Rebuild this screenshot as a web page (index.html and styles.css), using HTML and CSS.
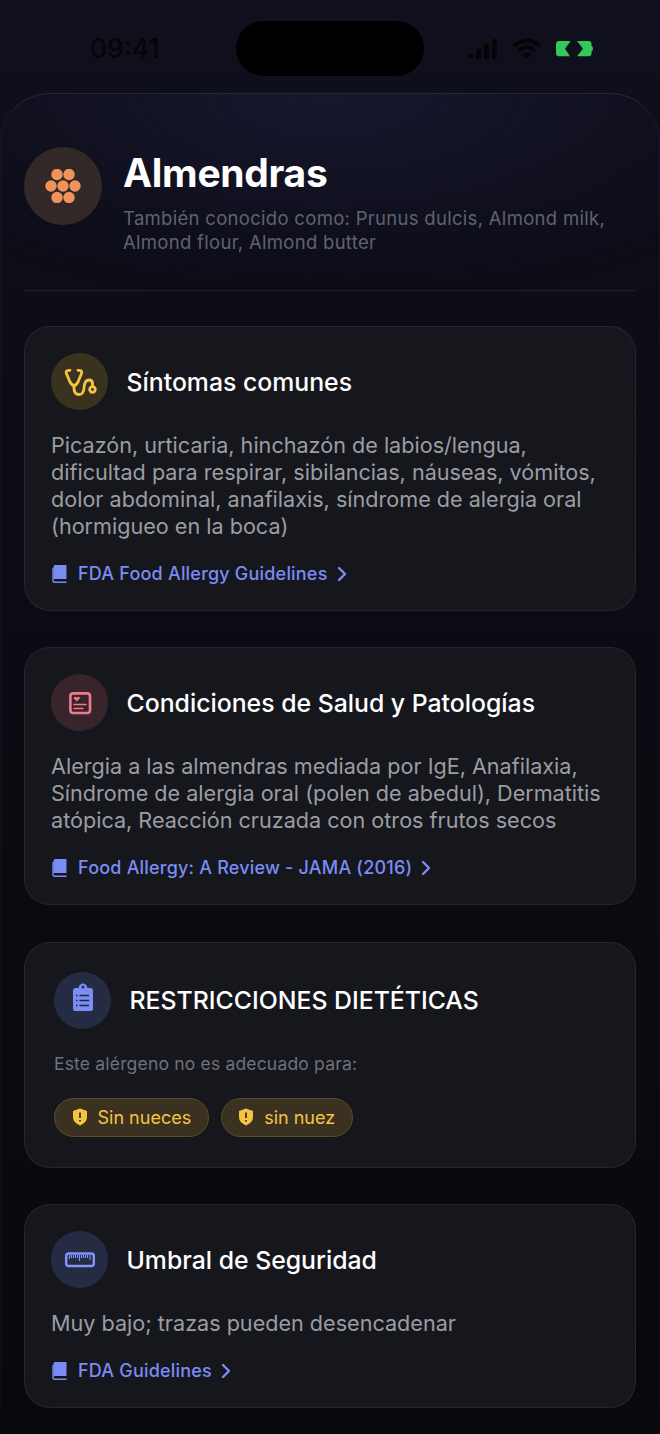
FILE: index.html
```html
<!DOCTYPE html>
<html lang="es">
<head>
<meta charset="UTF-8">
<meta name="viewport" content="width=device-width, initial-scale=1.0">
<title>Almendras</title>
<link rel="stylesheet" href="styles.css">
</head>
<body>
<div class="status-bar">
    <span class="time">09:41</span>
    <div class="island"></div>
    <div class="status-icons">
        <svg class="signal" width="30" height="22" viewBox="0 0 30 22" fill="#050507">
            <rect x="0" y="15" width="5" height="6" rx="2"/>
            <rect x="8" y="11" width="5" height="10" rx="1.5"/>
            <rect x="16" y="6" width="5" height="15" rx="1.5"/>
            <rect x="24" y="1" width="5" height="20" rx="1.5"/>
        </svg>
        <svg class="wifi" width="30" height="22" viewBox="0 0 30 22" fill="none" stroke="#050507" stroke-width="3.2">
            <path d="M2 8 Q15 -3 28 8"/>
            <path d="M7 12.5 Q15 5.5 23 12.5"/>
            <path d="M15 21 L10.5 16.5 Q15 13 19.5 16.5 Z" fill="#050507" stroke="none"/>
        </svg>
        <svg class="battery" width="37" height="16" viewBox="0 0 37 16" fill="#34c759">
            <path d="M3 0H14.700L9 7.700L14 15.300H3Q0 15.300 0 12.300V3Q0 0 3 0Z"/>
            <path d="M21 0H32.500Q35.500 0 35.500 3V4.800Q37 5.500 37 7.700Q37 9.800 35.500 10.500V12.300Q35.500 15.300 32.500 15.300H21L27 7.700Z"/>
        </svg>
    </div>
</div>

<div class="sheet">
    <header class="head">
        <div class="head-icon">
            <svg width="36" height="34" viewBox="0 0 36 34" fill="#f0935a">
                <circle cx="12" cy="5.500" r="5.700"/><circle cx="24" cy="5.500" r="5.700"/>
                <circle cx="6" cy="17" r="5.700"/><circle cx="18" cy="17" r="5.700"/><circle cx="30" cy="17" r="5.700"/>
                <circle cx="12" cy="28.500" r="5.700"/><circle cx="24" cy="28.500" r="5.700"/>
            </svg>
        </div>
        <div class="head-text">
            <h1>Almendras</h1>
            <p>También conocido como: Prunus dulcis, Almond milk, Almond flour, Almond butter</p>
        </div>
    </header>

    <section class="card">
        <div class="card-head">
            <div class="round yellow">
                <svg width="36" height="36" viewBox="0 0 36 36" fill="none" stroke="#f5c542" stroke-width="2.800" stroke-linecap="round">
                    <path d="M8 6.300H6.300Q3.400 6.300 4.400 9.600L8 18Q12 25 16 18L19.500 9.600Q20.500 6.300 17.500 6.300H16"/>
                    <path d="M12 22.500V25Q12.500 30.500 17 30.500Q21.500 30.500 22 24Q22.500 16 27 16Q30.500 16 30.500 19.500V22.500"/>
                    <circle cx="30.500" cy="25.500" r="2.800"/>
                </svg>
            </div>
            <h2>Síntomas comunes</h2>
        </div>
        <p class="body-text">Picazón, urticaria, hinchazón de labios/lengua, dificultad para respirar, sibilancias, náuseas, vómitos, dolor abdominal, anafilaxis, síndrome de alergia oral (hormigueo en la boca)</p>
        <a class="source">
            <svg class="book" width="15" height="18" viewBox="0 0 15 18"><path d="M3 0H14.500V14H3Q2 14 1.500 14.500V2Q1.500 0 3 0Z" fill="#7b8cf5"/><path d="M1 3V15.500Q1 17.300 3 17.300H14.500" fill="none" stroke="#7b8cf5" stroke-width="1.400"/></svg>
            FDA Food Allergy Guidelines
            <svg class="chev" width="10" height="16" viewBox="0 0 10 16" fill="none" stroke="#7b8cf5" stroke-width="2.400" stroke-linecap="round" stroke-linejoin="round"><path d="M2 2L8 8L2 14"/></svg>
        </a>
    </section>

    <section class="card">
        <div class="card-head">
            <div class="round pink">
                <svg width="36" height="36" viewBox="0 0 36 36" fill="none" stroke="#f07a8a" stroke-width="2.200" stroke-linecap="round">
                    <rect x="8.400" y="8.400" width="19.600" height="19.600" rx="2.800" stroke-width="2.600"/>
                    <path d="M14.800 16.600L11.800 13.600Q11.300 11.800 13 11.800Q14.300 11.800 14.800 12.800Q15.300 11.800 16.600 11.800Q18.300 11.800 17.800 13.600Z" fill="#f07a8a" stroke="none"/>
                    <path d="M12 19.500H24" stroke-width="1.500"/>
                    <path d="M12 23.500H21" stroke-width="1.500"/>
                </svg>
            </div>
            <h2>Condiciones de Salud y Patologías</h2>
        </div>
        <p class="body-text">Alergia a las almendras mediada por IgE, Anafilaxia, Síndrome de alergia oral (polen de abedul), Dermatitis atópica, Reacción cruzada con otros frutos secos</p>
        <a class="source">
            <svg class="book" width="15" height="18" viewBox="0 0 15 18"><path d="M3 0H14.500V14H3Q2 14 1.500 14.500V2Q1.500 0 3 0Z" fill="#7b8cf5"/><path d="M1 3V15.500Q1 17.300 3 17.300H14.500" fill="none" stroke="#7b8cf5" stroke-width="1.400"/></svg>
            Food Allergy: A Review - JAMA (2016)
            <svg class="chev" width="10" height="16" viewBox="0 0 10 16" fill="none" stroke="#7b8cf5" stroke-width="2.400" stroke-linecap="round" stroke-linejoin="round"><path d="M2 2L8 8L2 14"/></svg>
        </a>
    </section>

    <section class="card diet">
        <div class="card-head">
            <div class="round blue">
                <svg width="36" height="36" viewBox="0 0 36 36">
                    <path d="M10 6H13.500Q14.500 1.500 18 1.500Q21.500 1.500 22.500 6H26Q28 6 28 8.500V26.500Q28 29 26 29H10Q8 29 8 26.500V8.500Q8 6 10 6Z" fill="#7b8cf5"/>
                    <circle cx="18" cy="5" r="1.500" fill="#2a2f4a"/>
                    <path d="M14.500 13.500H24M14.500 18.500H24M14.500 23.500H24M11 13.500H12.500M11 18.500H12.500M11 23.500H12.500" stroke="#20243c" stroke-width="1.500"/>
                </svg>
            </div>
            <h2>RESTRICCIONES DIETÉTICAS</h2>
        </div>
        <p class="note">Este alérgeno no es adecuado para:</p>
        <div class="chips">
            <span class="chip">
                <svg width="16" height="18" viewBox="0 0 16 18"><path d="M8 0.500L15 3V9Q15 14.500 8 17.500Q1 14.500 1 9V3Z" fill="#f5c542"/><path d="M8 4.500V10M8 12V13.500" stroke="#3a3120" stroke-width="1.800"/></svg>
                Sin nueces
            </span>
            <span class="chip">
                <svg width="16" height="18" viewBox="0 0 16 18"><path d="M8 0.500L15 3V9Q15 14.500 8 17.500Q1 14.500 1 9V3Z" fill="#f5c542"/><path d="M8 4.500V10M8 12V13.500" stroke="#3a3120" stroke-width="1.800"/></svg>
                sin nuez
            </span>
        </div>
    </section>

    <section class="card">
        <div class="card-head">
            <div class="round blue">
                <svg width="36" height="36" viewBox="0 0 36 36" fill="none" stroke="#8494fa">
                    <rect x="4.200" y="11.500" width="27.600" height="12.500" rx="2.500" stroke-width="2.400"/>
                    <path d="M7.500 13V17M9.500 13V16M11.500 13V16M13.500 13V16M15.500 13V16M17.500 13V19M19.500 13V16M21.500 13V16M23.500 13V16M25.500 13V16M28 13V18" stroke-width="1.100"/>
                </svg>
            </div>
            <h2>Umbral de Seguridad</h2>
        </div>
        <p class="body-text">Muy bajo; trazas pueden desencadenar</p>
        <a class="source">
            <svg class="book" width="15" height="18" viewBox="0 0 15 18"><path d="M3 0H14.500V14H3Q2 14 1.500 14.500V2Q1.500 0 3 0Z" fill="#7b8cf5"/><path d="M1 3V15.500Q1 17.300 3 17.300H14.500" fill="none" stroke="#7b8cf5" stroke-width="1.400"/></svg>
            FDA Guidelines
            <svg class="chev" width="10" height="16" viewBox="0 0 10 16" fill="none" stroke="#7b8cf5" stroke-width="2.400" stroke-linecap="round" stroke-linejoin="round"><path d="M2 2L8 8L2 14"/></svg>
        </a>
    </section>
</div>
</body>
</html>
```

FILE: styles.css
```css
html, body {
    height: 100%;
}
body {
    margin: 0;
    font-family: Inter, "Noto Sans", sans-serif;
    color: #fff;
    background: linear-gradient(180deg, #10101e 0%, #0c0c15 30%, #08090c 100%);
    overflow: hidden;
}
.status-bar {
    height: 93px;
    box-sizing: border-box;
    padding-top: 21px;
    display: grid;
    grid-template-columns: 236px 188px 236px;
}
.time {
    padding: 12px 0 0 90px;
    font-size: 26.500px;
    line-height: 30px;
    font-weight: 500;
    color: #050507;
}
.island {
    height: 55px;
    border-radius: 28px;
    background: #000;
}
.status-icons {
    display: flex;
    align-items: center;
    gap: 14px;
    height: 55px;
    padding-left: 44px;
}
.sheet {
    padding: 0 24px;
    border-top: 1px solid rgba(255, 255, 255, 0.1);
    border-radius: 50px 50px 0 0;
    background: radial-gradient(ellipse 500px 210px at 50% 0, #17182f 0%, rgba(16, 16, 32, 0.4) 70%, transparent 100%);
    box-shadow: inset 1px 0 0 rgba(255, 255, 255, 0.03), inset -1px 0 0 rgba(255, 255, 255, 0.03);
}
.head {
    display: flex;
    gap: 21px;
    padding: 53px 0 36px;
    border-bottom: 1px solid rgba(255, 255, 255, 0.08);
    margin-bottom: 35px;
}
.head-icon {
    flex: none;
    width: 78px;
    height: 78px;
    border-radius: 50%;
    background: #332828;
    display: flex;
    align-items: center;
    justify-content: center;
}
.head-text h1 {
    margin: 0;
    font-size: 39px;
    line-height: 52px;
    font-weight: 700;
    letter-spacing: -0.3px;
}
.head-text p {
    margin: 7px 0 0;
    font-size: 18.500px;
    line-height: 24px;
    letter-spacing: 0.3px;
    color: #60626f;
}
.card {
    box-sizing: border-box;
    padding: 26px 26px 23px;
    margin-bottom: 36.400px;
    border: 1px solid rgba(255, 255, 255, 0.07);
    border-radius: 26px;
    background: #15171d;
}
.card-head {
    display: flex;
    align-items: center;
    gap: 18.500px;
}
.card-head h2 {
    margin: 0;
    font-size: 24.800px;
    line-height: 30px;
    font-weight: 500;
}
.round {
    flex: none;
    width: 57px;
    height: 57px;
    border-radius: 50%;
    display: flex;
    align-items: center;
    justify-content: center;
}
.yellow {
    background: #38321f;
}
.pink {
    background: #38242b;
}
.blue {
    background: #262b44;
}
.body-text {
    margin: 22px 0 0;
    font-size: 21.600px;
    line-height: 27px;
    color: #9b9da3;
}
.source {
    display: flex;
    align-items: center;
    gap: 12px;
    margin-top: 21px;
    font-size: 18px;
    line-height: 26px;
    font-weight: 500;
    letter-spacing: 0.2px;
    color: #7b8cf5;
}
.book {
    margin-left: 1px;
    margin-right: -1px;
}
.chev {
    margin-left: -3px;
}
.diet {
    padding: 29px 29px 30px;
}
.note {
    margin: 23px 0 0;
    font-size: 17.500px;
    line-height: 24px;
    letter-spacing: 0.18px;
    color: #6f717a;
}
.chips {
    display: flex;
    gap: 12px;
    margin-top: 22px;
}
.chip {
    display: flex;
    align-items: center;
    gap: 10px;
    height: 39px;
    box-sizing: border-box;
    padding: 0 16.500px;
    border: 1px solid #5a4c28;
    border-radius: 20px;
    background: #3a3120;
    font-size: 18px;
    color: #f5c542;
}
```
